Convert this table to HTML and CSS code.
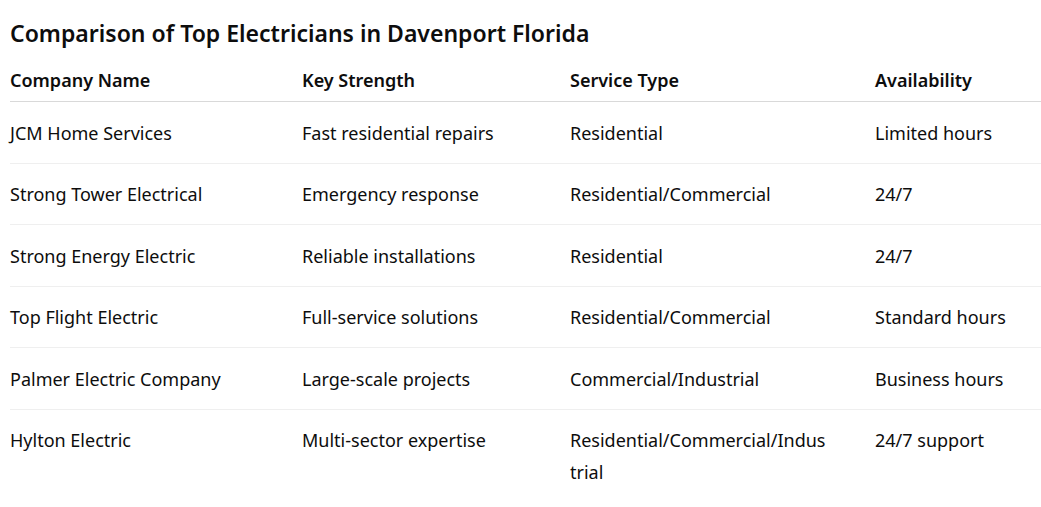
FILE: index.html
```html
<!DOCTYPE html>
<html lang="en">
<head>
<meta charset="utf-8">
<title>Comparison of Top Electricians in Davenport Florida</title>
<link rel="stylesheet" href="styles.css">
</head>
<body>
<main class="page">
  <h2 class="title">Comparison of Top Electricians in Davenport Florida</h2>
  <table class="compare">
    <colgroup>
      <col class="c1"><col class="c2"><col class="c3"><col class="c4">
    </colgroup>
    <thead>
      <tr><th>Company Name</th><th>Key Strength</th><th>Service Type</th><th>Availability</th></tr>
    </thead>
    <tbody>
      <tr><td>JCM Home Services</td><td>Fast residential repairs</td><td>Residential</td><td>Limited hours</td></tr>
      <tr><td>Strong Tower Electrical</td><td>Emergency response</td><td>Residential/Commercial</td><td>24/7</td></tr>
      <tr><td>Strong Energy Electric</td><td>Reliable installations</td><td>Residential</td><td>24/7</td></tr>
      <tr><td>Top Flight Electric</td><td>Full-service solutions</td><td>Residential/Commercial</td><td>Standard hours</td></tr>
      <tr><td>Palmer Electric Company</td><td>Large-scale projects</td><td>Commercial/Industrial</td><td>Business hours</td></tr>
      <tr><td>Hylton Electric</td><td>Multi-sector expertise</td><td>Residential/Commercial/Industrial</td><td>24/7 support</td></tr>
    </tbody>
  </table>
</main>
</body>
</html>
```
FILE: styles.css
```css
html, body {
  margin: 0;
  padding: 0;
  background: #fff;
}
body {
  font-family: "Noto Sans", "Open Sans", "Liberation Sans", sans-serif;
  color: #0d0d0d;
}
.page {
  padding: 17px 0 0 10px;
}
.title {
  margin: 0 0 19px 0;
  font-size: 23px;
  line-height: 32px;
  font-weight: 600;
}
.compare {
  width: 1031px;
  border-collapse: collapse;
  table-layout: fixed;
  font-size: 18px;
}
.c1 { width: 292px; }
.c2 { width: 268px; }
.c3 { width: 305px; }
.c4 { width: 166px; }
.compare th {
  text-align: left;
  font-weight: 600;
  line-height: 24px;
  padding: 0 0 9px 0;
  border-bottom: 1px solid #d9d9d9;
}
.compare td {
  line-height: 32px;
  padding: 14.5px 47px 14px 0;
  border-bottom: 1px solid #efefef;
  word-break: break-all;
  vertical-align: top;
}
.compare td:last-child { padding-right: 0; }
.compare tbody tr:last-child td { border-bottom: none; }
```
